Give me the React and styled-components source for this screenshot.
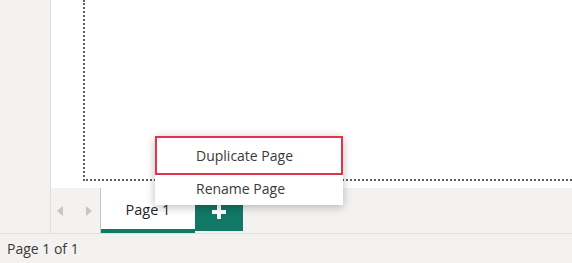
import React from 'react';
import styled, { createGlobalStyle } from 'styled-components';

const GlobalStyle = createGlobalStyle`
    body {
        margin: 0;
        font-family: 'Open Sans', 'Noto Sans', sans-serif;
        background: #f3f2f1;
    }
`;

const menuItems = [
    { label: 'Duplicate Page', focused: true },
    { label: 'Rename Page', focused: false },
];

const App = () => {
    return (
        <Screen>
            <GlobalStyle />
            <Workspace>
                <Rail />
                <ReportColumn>
                    <Canvas>
                        <PageFrame />
                    </Canvas>
                    <TabBar>
                        <NavArrows>
                            <Arrow $dir="left" />
                            <Arrow $dir="right" />
                        </NavArrows>
                        <PageTab>Page 1</PageTab>
                        <AddButton aria-label="New page">
                            <svg width="14" height="14" viewBox="0 0 14 14">
                                <path d="M5 0h4v5h5v4H9v5H5V9H0V5h5z" fill="#fff" />
                            </svg>
                        </AddButton>
                    </TabBar>
                </ReportColumn>
            </Workspace>
            <StatusBar>Page 1 of 1</StatusBar>

            <ContextMenu>
                {menuItems.map((item) => (
                    <MenuItem key={item.label} $focused={item.focused}>{item.label}</MenuItem>
                ))}
            </ContextMenu>
        </Screen>
    );
}

const Screen = styled.div`
    position: relative;
    width: 572px;
    height: 263px;
    overflow: hidden;
    display: flex;
    flex-direction: column;
    background: #f3f2f1;
`;

const Workspace = styled.div`
    display: flex;
    height: 233px;
`;

const Rail = styled.div`
    width: 50px;
    flex-shrink: 0;
    background: #f3f2f1;
    border-right: 1px solid #e1dfdd;
`;

const ReportColumn = styled.div`
    flex: 1;
    display: flex;
    flex-direction: column;
`;

const Canvas = styled.div`
    height: 188px;
    background: #fff;
    display: flex;
    padding: 0 0 7px 32px;
    box-sizing: border-box;
`;

const PageFrame = styled.div`
    flex: 1;
    border-left: 2px dotted #605e5c;
    border-bottom: 2px dotted #605e5c;
`;

const TabBar = styled.div`
    height: 45px;
    display: flex;
    align-items: stretch;
    background: #f3f2f1;
`;

const NavArrows = styled.div`
    width: 50px;
    display: flex;
    align-items: center;
    justify-content: space-between;
    padding: 0 8px 0 6px;
    box-sizing: border-box;
    border-right: 1px solid #c8c6c4;
`;

const Arrow = styled.span`
    width: 0;
    height: 0;
    border-top: 5px solid transparent;
    border-bottom: 5px solid transparent;
    ${({ $dir }) => $dir === 'left'
        ? 'border-right: 6px solid #c8c6c4;'
        : 'border-left: 6px solid #c8c6c4;'}
`;

const PageTab = styled.div`
    width: 94px;
    background: #fff;
    border-bottom: 4px solid #117865;
    box-sizing: border-box;
    display: flex;
    align-items: center;
    justify-content: center;
    padding-top: 2px;
    font-size: 14.5px;
    color: #252423;
`;

const AddButton = styled.button`
    align-self: flex-end;
    width: 48px;
    height: 26px;
    margin-bottom: 2px;
    border: none;
    padding: 0 0 12px;
    background: #117865;
    display: flex;
    align-items: center;
    justify-content: center;
    cursor: pointer;
`;

const StatusBar = styled.div`
    flex: 1;
    border-top: 1px solid #e1dfdd;
    display: flex;
    align-items: center;
    padding-left: 7px;
    font-size: 14px;
    color: #3b3a39;
`;

const ContextMenu = styled.div`
    position: absolute;
    left: 155px;
    top: 136px;
    width: 188px;
    background: #fff;
    box-shadow: 0 2px 9px rgba(0, 0, 0, 0.26);
    font-size: 14px;
    color: #3b3a39;
`;

const MenuItem = styled.div`
    height: ${({ $focused }) => ($focused ? '39px' : '30px')};
    display: flex;
    align-items: center;
    padding-left: 39px;
    box-sizing: border-box;
    border: 2px solid ${({ $focused }) => ($focused ? '#e3324a' : 'transparent')};
    padding-bottom: ${({ $focused }) => ($focused ? '0' : '3px')};
`;

export default App;
